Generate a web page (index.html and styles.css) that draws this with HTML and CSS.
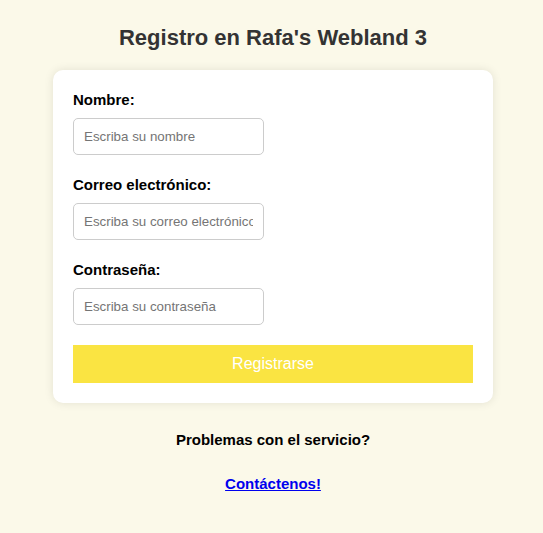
FILE: index.html
```html
<!DOCTYPE html>
<html lang="es">
<head>
<meta charset="utf-8">
<title>Registro</title>
<link rel="stylesheet" href="styles.css">
</head>
<body>
<h1>Registro en Rafa's Webland 3</h1>
<form class="card">
  <label for="nombre">Nombre:</label>
  <input id="nombre" type="text" placeholder="Escriba su nombre">
  <label for="correo">Correo electrónico:</label>
  <input id="correo" type="email" placeholder="Escriba su correo electrónico">
  <label for="clave">Contraseña:</label>
  <input id="clave" type="password" placeholder="Escriba su contraseña">
  <button type="submit">Registrarse</button>
</form>
<p class="help">Problemas con el servicio?</p>
<p class="help"><a href="#contacto">Contáctenos!</a></p>
</body>
</html>
```
FILE: styles.css
```css
body {
  margin: 0;
  padding: 20px 20px 20px 23px;
  background: #fbf9e9;
  font-family: "Franklin Gothic Medium", "Liberation Sans", Arial, sans-serif;
}
h1 {
  margin: 0 0 14px;
  font-size: 22px;
  line-height: 36px;
  text-align: center;
  color: #333;
}
.card {
  box-sizing: border-box;
  max-width: 440px;
  margin: 0 auto;
  padding: 20px;
  background: #fff;
  border-radius: 10px;
  box-shadow: 0 0 10px rgba(0, 0, 0, 0.1);
}
label {
  display: block;
  margin-bottom: 8px;
  font-size: 15px;
  line-height: 20px;
  font-weight: bold;
}
input {
  display: block;
  box-sizing: border-box;
  width: 191px;
  height: 37px;
  margin-bottom: 20px;
  padding: 10px;
  border: 1px solid #ccc;
  border-radius: 5px;
  font-family: "Liberation Sans", Arial, sans-serif;
}
button {
  display: block;
  width: 100%;
  height: 38px;
  padding: 0;
  border: 0;
  background: #fae442;
  color: #fff;
  font: 16px "Liberation Sans", Arial, sans-serif;
}
.help {
  margin: 24px 0;
  font-size: 15px;
  line-height: 20px;
  font-weight: bold;
  text-align: center;
}
.card + .help {
  margin-top: 27px;
}
a {
  color: #0000ee;
}
```
